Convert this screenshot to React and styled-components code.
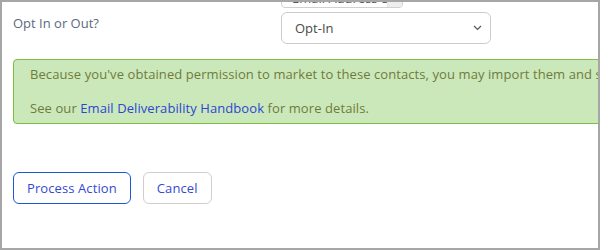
import React from 'react';
import styled, { createGlobalStyle } from 'styled-components';

const GlobalStyle = createGlobalStyle`
  html, body {
    margin: 0;
    padding: 0;
    background: #fff;
  }
  body {
    font-family: "Open Sans", "Liberation Sans", Arial, sans-serif;
  }
`;

const Frame = styled.div`
  width: 600px;
  height: 250px;
  box-sizing: border-box;
  border: 2px solid #a6a6a6;
  overflow: hidden;
  background: #fff;
`;

const Page = styled.div`
  margin-top: -16px;
  padding-left: 11px;
`;

const FormRow = styled.div`
  display: grid;
  grid-template-columns: 268px 210px;
  align-items: start;
  margin-bottom: ${p => p.gap || 0}px;
`;

const Label = styled.label`
  font-size: 13px;
  color: #5a6a80;
  padding-top: 2px;
`;

const Chip = styled.div`
  display: inline-flex;
  align-items: stretch;
  height: 22px;
  box-sizing: border-box;
  border: 1px solid #d0d0d0;
  border-radius: 4px;
  overflow: hidden;
  font-size: 13px;
  color: #555;
  width: 122px;
`;

const ChipText = styled.span`
  flex: 1;
  padding: 2px 6px 0 10px;
  white-space: nowrap;
  overflow: hidden;
`;

const ChipRemove = styled.span`
  width: 14px;
  background: #eeeeee;
  border-left: 1px solid #e2e2e2;
`;

const SelectBox = styled.div`
  display: flex;
  align-items: center;
  justify-content: space-between;
  height: 32px;
  box-sizing: border-box;
  border: 1px solid #cccccc;
  border-radius: 6px;
  padding: 0 8px 0 13px;
  font-size: 13px;
  color: #4a4a4a;
`;

const Alert = styled.div`
  width: 640px;
  box-sizing: border-box;
  background: #cbe8ba;
  border: 1px solid #7bc043;
  border-radius: 4px;
  padding: 4px 16px 5px 16px;
  color: #6f7b3c;
  font-size: 13px;
  line-height: 20px;
  letter-spacing: 0.08px;
`;

const Para = styled.p`
  margin: 0;
  white-space: nowrap;
  & + & {
    margin-top: 14px;
  }
`;

const Link = styled.a`
  color: #2b46d6;
  text-decoration: none;
`;

const Actions = styled.div`
  display: flex;
  gap: 12px;
  margin-top: 48px;
`;

const Button = styled.button`
  height: 32px;
  box-sizing: border-box;
  padding: 0 13px;
  background: #fff;
  border: 1px solid ${p => (p.primary ? '#1e56d6' : '#cfcfcf')};
  border-radius: 6px;
  font-family: inherit;
  font-size: 13px;
  letter-spacing: 0.1px;
  color: #3549d2;
  cursor: pointer;
`;

const Chevron = () => (
  <svg width="9" height="6" viewBox="0 0 9 6" fill="none">
    <path d="M1 1l3.5 3.5L8 1" stroke="#555" strokeWidth="1.2" />
  </svg>
);

export default function App() {
  return (
    <Frame>
      <GlobalStyle />
      <Page>
        <FormRow gap={4}>
          <span />
          <Chip>
            <ChipText>Email Address 8</ChipText>
            <ChipRemove />
          </Chip>
        </FormRow>
        <FormRow gap={15}>
          <Label>Opt In or Out?</Label>
          <SelectBox>
            <span>Opt-In</span>
            <Chevron />
          </SelectBox>
        </FormRow>
        <Alert>
          <Para>
            Because you've obtained permission to market to these contacts, you may import them and send them email.
          </Para>
          <Para>
            See our <Link href="#">Email Deliverability Handbook</Link> for more details.
          </Para>
        </Alert>
        <Actions>
          <Button primary>Process Action</Button>
          <Button>Cancel</Button>
        </Actions>
      </Page>
    </Frame>
  );
}
